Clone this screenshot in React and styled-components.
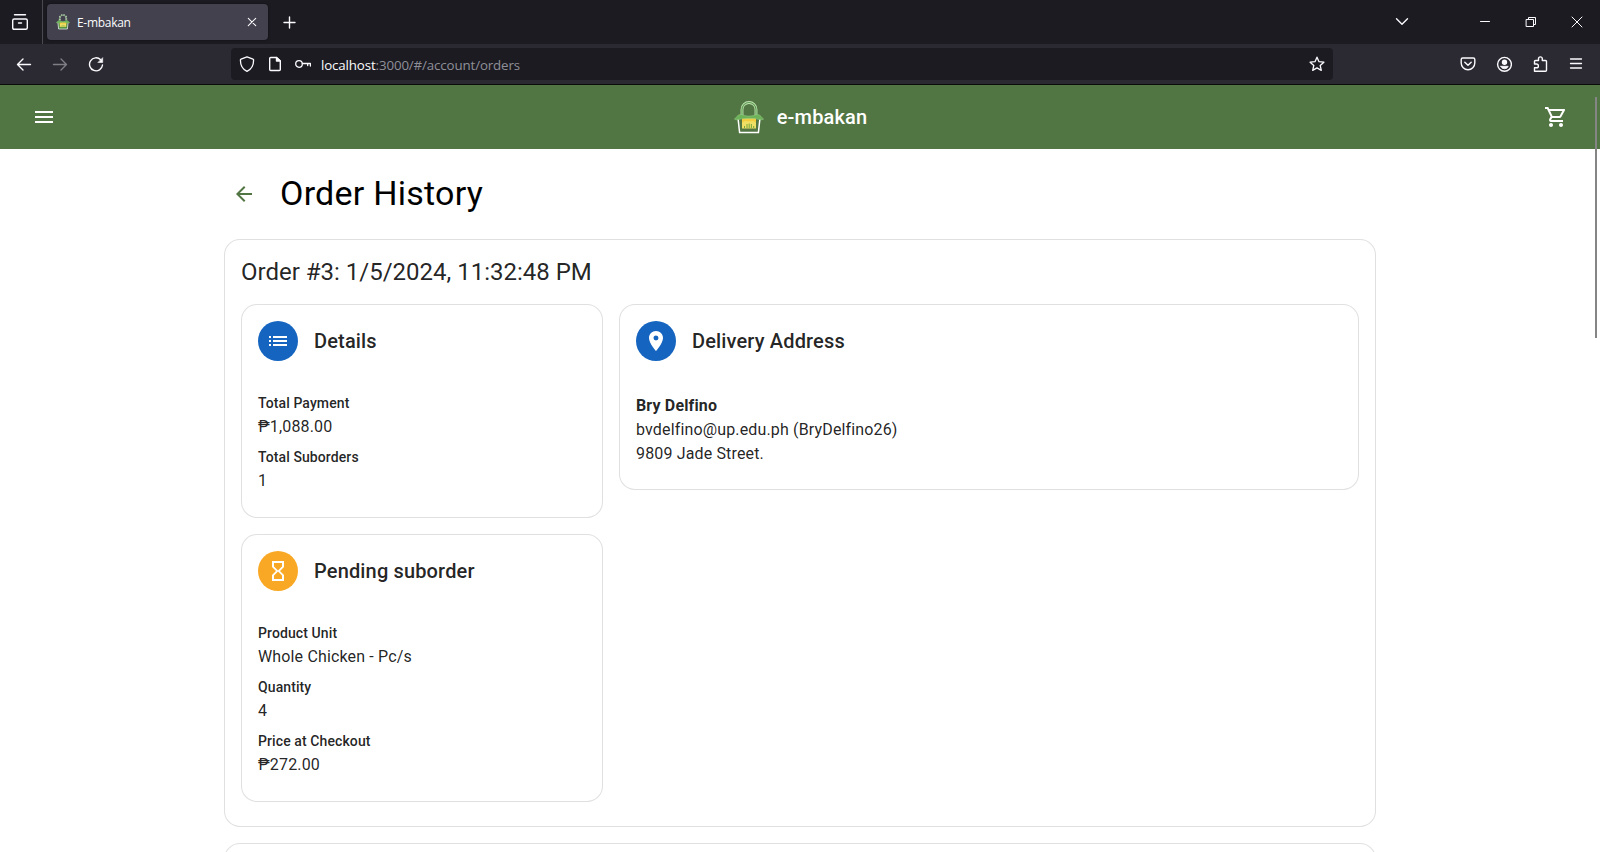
import React from "react";
import styled, { createGlobalStyle } from "styled-components";
import {
  MdMenu,
  MdOutlineShoppingCart,
  MdArrowBack,
  MdList,
  MdLocationOn,
  MdHourglassEmpty,
} from "react-icons/md";

const GlobalStyle = createGlobalStyle`
  * { box-sizing: border-box; }
  body { margin: 0; background: #fff; overflow: hidden; }
`;

const Window = styled.div`
  display: flex;
  flex-direction: column;
  height: 852px;
  overflow: hidden;
  font-family: Roboto, "Liberation Sans", sans-serif;
  color: rgba(0, 0, 0, 0.87);
`;

const TitleBar = styled.div`
  display: flex;
  align-items: center;
  height: 44px;
  flex: none;
  background: #1c1b22;
  color: #fbfbfe;
`;

const ViewButton = styled.div`
  display: flex;
  align-items: center;
  width: 43px;
  height: 44px;
  padding-left: 12px;
  border-right: 1px solid #4a4950;
`;

const Tab = styled.div`
  display: flex;
  align-items: center;
  width: 221px;
  height: 36px;
  margin-left: 4px;
  padding: 0 8px 0 9px;
  border-radius: 4px;
  background: #42414d;
  box-shadow: 0 0 3px rgba(0, 0, 0, 0.5);
`;

const TabTitle = styled.span`
  flex: 1;
  margin-left: 7px;
  padding-top: 2px;
  font: 12px/16px "Open Sans", "Noto Sans", sans-serif;
  letter-spacing: -0.3px;
`;

const NewTab = styled.div`
  display: flex;
  margin-left: 14px;
`;

const WindowControls = styled.div`
  display: flex;
  align-items: center;
  gap: 30px;
  margin-left: auto;
  padding: 0 15px 0 0;
`;

const TabsMenu = styled.div`
  display: flex;
  margin-right: 37px;
`;

const NavBar = styled.div`
  display: flex;
  align-items: center;
  height: 41px;
  flex: none;
  padding: 0 16px;
  background: #2b2a33;
  border-bottom: 1px solid #0c0c0d;
  color: #fbfbfe;
`;

const NavButtons = styled.div`
  display: flex;
  gap: 20px;
  width: 215px;
`;

const UrlBar = styled.div`
  display: flex;
  align-items: center;
  width: 1102px;
  height: 32px;
  padding: 0 8px;
  border-radius: 4px;
  background: #1c1b22;
`;

const UrlIcons = styled.div`
  display: flex;
  gap: 12px;
`;

const Url = styled.div`
  flex: 1;
  margin-left: 10px;
  padding-top: 2px;
  font: 13.33px/20px "Open Sans", "Noto Sans", sans-serif;
  letter-spacing: -0.14px;
  color: #8f8f98;
  span { color: #fbfbfe; }
`;

const Extras = styled.div`
  display: flex;
  gap: 20px;
  margin-left: auto;
`;

const Glyph = styled.svg`
  display: block;
  flex: none;
  fill: none;
  stroke: currentColor;
  stroke-width: ${(p) => p.$weight || 1.25};
  stroke-linecap: round;
  stroke-linejoin: round;
  opacity: ${(p) => (p.$dim ? 0.4 : 1)};
`;

const AppBar = styled.header`
  display: flex;
  align-items: center;
  justify-content: space-between;
  height: 64px;
  flex: none;
  padding: 0 32px;
  background: #527643;
  color: #fff;
`;

const Brand = styled.div`
  display: flex;
  align-items: center;
  gap: 13px;
  padding-left: 1px;
  font-size: 20px;
  font-weight: 500;
  line-height: 32px;
  letter-spacing: 0.15px;
`;

const Container = styled.main`
  width: 1152px;
  margin: 24px auto 0;
  display: flex;
  flex-direction: column;
`;

const PageHeader = styled.div`
  display: flex;
  align-items: center;
  gap: 16px;
  height: 42px;
  margin-bottom: 24px;
`;

const BackButton = styled.div`
  display: flex;
  align-items: center;
  justify-content: center;
  width: 40px;
  height: 40px;
  color: #527643;
`;

const PageTitle = styled.h1`
  margin: 0;
  padding-bottom: 2px;
  font-size: 34px;
  font-weight: 400;
  line-height: 40px;
  letter-spacing: 0.25px;
  color: #000;
`;

const Outlined = styled.section`
  border: 1px solid rgba(0, 0, 0, 0.12);
  border-radius: 16px;
  background: #fff;
`;

const Order = styled(Outlined)`
  padding: 16px 16px 24px;
  margin-bottom: 16px;
`;

const OrderTitle = styled.h2`
  margin: 0 0 16px;
  font-size: 24px;
  font-weight: 400;
  line-height: 32px;
`;

const Cards = styled.div`
  display: grid;
  grid-template-columns: 362px 740px;
  gap: 16px;
  align-items: start;
`;

const CardHeader = styled.div`
  display: flex;
  align-items: center;
  gap: 16px;
  padding: 16px;
`;

const Avatar = styled.div`
  display: flex;
  align-items: center;
  justify-content: center;
  width: 40px;
  height: 40px;
  border-radius: 50%;
  background: ${(p) => p.$color};
  color: #fff;
`;

const CardTitle = styled.h3`
  margin: 0;
  font-size: 20px;
  font-weight: 500;
  line-height: 32px;
  letter-spacing: 0.15px;
`;

const CardContent = styled.div`
  display: flex;
  flex-direction: column;
  gap: ${(p) => p.$gap || 0}px;
  padding: 16px 16px 24px;
`;

const Label = styled.div`
  padding-bottom: 2px;
  font-size: 14px;
  font-weight: 500;
  line-height: 20px;
  letter-spacing: 0.1px;
`;

const Text = styled.div`
  font-size: 16px;
  font-weight: ${(p) => (p.$bold ? 700 : 400)};
  line-height: 24px;
  letter-spacing: 0.15px;
`;

const Address = styled.div`
  padding-top: 1px;
  margin-bottom: -1px;
`;

const ScrollThumb = styled.div`
  position: absolute;
  top: 97px;
  left: 1595px;
  width: 2px;
  height: 241px;
  background: #858585;
`;

function Basket({ width, height, small }) {
  return (
    <svg width={width} height={height} viewBox="0 0 30 33">
      <path d="M8 17V8.500a7 7 0 0 1 14 0V17" fill="none" stroke={small ? "#e8f5e4" : "#c4e5b7"} strokeWidth={small ? 3.6 : 2.8} strokeDasharray={small ? "3 2" : undefined} />
      <path d="M8 17V8.500a7 7 0 0 1 14 0V17" fill="none" stroke="#5e9d50" strokeWidth="1.200" />
      <path d="M4 17l1.600 14.500h18.800L26 17" fill={small ? "#44873f" : "none"} stroke="#fff" strokeWidth="1.500" />
      <path d="M8 17h14v10.500H8z" fill="#efdf65" />
      <path d="M8 17h14v4.500l-3-1.500-4 .4-4-.4-3 1.500z" fill="#f4cd3e" />
      <path d="M10.500 27v-2M13 27v-4M15.200 27v-4.500M17.400 27v-4M19.700 27v-2" stroke="#78a841" strokeWidth="1" />
      <path d="M.3 18c2-1 3-4.500 6-4.500 3 0 3.700 1.500 8.700 1.500s5.700-1.500 8.700-1.500c3 0 4 3.500 6 4.500-2 1.300-4 .8-6 .2-3-.8-14.400-.8-17.400 0-2 .6-4 1.100-6-.2z" fill="#6db35a" stroke="#a6d595" strokeWidth=".4" />
    </svg>
  );
}

function Icon({ d, size = 16, weight, dim, children }) {
  return (
    <Glyph width={size} height={size} viewBox={`0 0 ${size} ${size}`} $weight={weight} $dim={dim}>
      {d && <path d={d} />}
      {children}
    </Glyph>
  );
}

function Field({ label, value }) {
  return (
    <div>
      <Label>{label}</Label>
      <Text>{value}</Text>
    </div>
  );
}

function InfoCard({ color, icon, title, gap, children }) {
  return (
    <Outlined>
      <CardHeader>
        <Avatar $color={color}>{icon}</Avatar>
        <CardTitle>{title}</CardTitle>
      </CardHeader>
      <CardContent $gap={gap}>{children}</CardContent>
    </Outlined>
  );
}

function BrowserChrome() {
  return (
    <>
      <TitleBar>
        <ViewButton>
          <Icon weight={1.4} d="M2.500 .8h11M2.200 5h11.600q1.500 0 1.500 1.500v7.300q0 1.500-1.500 1.500H2.200Q.7 15.300.7 13.800V6.500Q.7 5 2.200 5zM6.500 9h3" />
        </ViewButton>
        <Tab>
          <Basket width={14} height={16} small />
          <TabTitle>E-mbakan</TabTitle>
          <Icon weight={1.1} d="M4.300 4.300l7.400 7.400M11.700 4.300l-7.400 7.400" />
        </Tab>
        <NewTab>
          <Icon weight={1.4} d="M7.500 3v11M2 8.500h11" />
        </NewTab>
        <WindowControls>
          <TabsMenu>
            <Icon weight={1.4} d="M2.500 4.700l5.500 5.500 5.500-5.500" />
          </TabsMenu>
          <Icon weight={1} d="M3.500 7.500h9" />
          <Icon weight={1}>
            <path d="M3.500 5.500h7v7h-7zM5.500 5.500v-2h7v7h-2" />
          </Icon>
          <Icon weight={1} d="M3 3l10 10M13 3l-10 10" />
        </WindowControls>
      </TitleBar>
      <NavBar>
        <NavButtons>
          <Icon weight={1.4} d="M14.500 8.500H1.500M7 3L1.500 8.500 7 14" />
          <Icon weight={1.4} dim d="M1.500 8.500h13M9 3l5.500 5.500L9 14" />
          <Icon weight={1.4}>
            <path d="M12.700 3.800A6.500 6.500 0 1 0 14.500 9" />
            <path d="M14.700 2v4.500h-4.500z" fill="currentColor" strokeWidth=".6" />
          </Icon>
        </NavButtons>
        <UrlBar>
          <UrlIcons>
            <Icon weight={1.3} d="M8 .8l6 2.300q.6.200.6.900C14.600 9.500 12 13.500 8 15.300 4 13.500 1.400 9.500 1.400 4q0-.7.6-.9z" />
            <Icon weight={1.4}>
              <path d="M9.500 1.500H3.700q-1 0-1 1v11q0 1 1 1h8.600q1 0 1-1V5z" />
              <path d="M9.500 1.500V5h3.800z" fill="currentColor" />
            </Icon>
            <Icon weight={1.3}>
              <circle cx="4" cy="8" r="3.300" />
              <path d="M7.400 7.500h8v2.500M12.700 7.500v2" />
            </Icon>
          </UrlIcons>
          <Url>
            <span>localhost</span>:3000/#/account/orders
          </Url>
          <Icon weight={1.3} d="M8 1.200l2 4.500 4.900.5-3.700 3.300 1.100 4.900L8 11.900l-4.300 2.500 1.100-4.900L1.100 6.200 6 5.700z" />
        </UrlBar>
        <Extras>
          <Icon weight={1.4} d="M2.700 2h10.600q1.500 0 1.500 1.500V7a6.800 6.800 0 0 1-13.600 0V3.500Q1.200 2 2.700 2zM4.800 6.200L8 9.300l3.200-3.100" />
          <Icon weight={1.4}>
            <circle cx="8.500" cy="8.300" r="6.900" />
            <circle cx="8.500" cy="6.200" r="2" fill="currentColor" />
            <path d="M4.800 10.300h7.400q-.8 2.500-3.700 2.500t-3.700-2.500z" fill="currentColor" strokeWidth=".8" />
          </Icon>
          <Icon weight={1.4} d="M2.500 15.200h11q1 0 1-1V5.500q0-1-1-1h-3.200V2.800a1.900 1.900 0 0 0-3.800 0v1.700h-3q-1 0-1 1V8h2a1.900 1.900 0 0 1 0 3.800h-2z" />
          <Icon weight={1.3} d="M2.500 3h11M2.500 7.500h11M2.500 12h11" />
        </Extras>
      </NavBar>
    </>
  );
}

export default function App() {
  return (
    <Window>
      <GlobalStyle />
      <BrowserChrome />
      <AppBar>
        <MdMenu size={24} />
        <Brand>
          <Basket width={30} height={33} />
          <span>e-mbakan</span>
        </Brand>
        <MdOutlineShoppingCart size={24} />
      </AppBar>
      <Container>
        <PageHeader>
          <BackButton>
            <MdArrowBack size={24} />
          </BackButton>
          <PageTitle>Order History</PageTitle>
        </PageHeader>
        <Order>
          <OrderTitle>Order #3: 1/5/2024, 11:32:48 PM</OrderTitle>
          <Cards>
            <InfoCard color="#1565c0" icon={<MdList size={24} />} title="Details" gap={8}>
              <Field label="Total Payment" value="₱1,088.00" />
              <Field label="Total Suborders" value="1" />
            </InfoCard>
            <InfoCard color="#1565c0" icon={<MdLocationOn size={24} />} title="Delivery Address">
              <Address>
                <Text $bold>Bry Delfino</Text>
                <Text>bvdelfino@up.edu.ph (BryDelfino26)</Text>
                <Text>9809 Jade Street.</Text>
              </Address>
            </InfoCard>
            <InfoCard color="#f9a825" icon={<MdHourglassEmpty size={24} />} title="Pending suborder" gap={8}>
              <Field label="Product Unit" value="Whole Chicken - Pc/s" />
              <Field label="Quantity" value="4" />
              <Field label="Price at Checkout" value="₱272.00" />
            </InfoCard>
          </Cards>
        </Order>
        <Order />
      </Container>
      <ScrollThumb />
    </Window>
  );
}
